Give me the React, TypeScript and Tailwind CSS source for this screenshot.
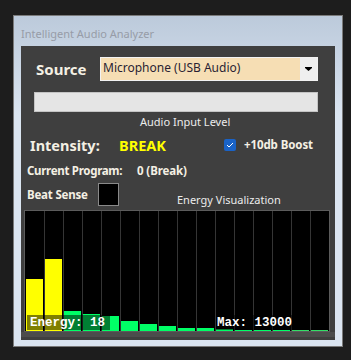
import React from "react";

const bars: { h: number; c: string }[] = [
  { h: 52, c: "#ffff00" },
  { h: 72, c: "#ffff00" },
  { h: 20, c: "#00ff66" },
  { h: 17, c: "#00ff66" },
  { h: 15, c: "#00ff66" },
  { h: 10, c: "#00ff66" },
  { h: 7, c: "#00ff66" },
  { h: 5, c: "#00ff66" },
  { h: 3, c: "#00ff66" },
  { h: 3, c: "#00ff66" },
  { h: 2, c: "#00ff66" },
  { h: 1, c: "#00ff66" },
  { h: 1, c: "#00ff66" },
  { h: 1, c: "#00ff66" },
  { h: 1, c: "#33dd66" },
  { h: 1, c: "#33dd66" },
];

const sans = { fontFamily: '"Noto Sans", "Open Sans", sans-serif' };

export default function App() {
  return (
    <div className="w-[351px] h-[360px] bg-[#1d1d1d] pt-[15px] pl-[13px] overflow-hidden" style={sans}>
      <div className="w-[330px] h-[332px] border border-[#7a7a7a] bg-gradient-to-b from-[#bccadb] to-[#dbe5f1] to-[30%] pl-[7px]">
        <div className="h-[30px] pt-[10px] text-[11px] leading-[16px] text-[#979ca7]">
          Intelligent Audio Analyzer
        </div>
        <div className="w-[314px] h-[294px] bg-[#3f3f3f] flex flex-col">
          {/* Source row */}
          <div className="mt-[11px] h-[24px] flex items-center">
            <div className="ml-[15px] w-[64px] text-[15px] font-bold text-[#f4f0e4] leading-[20px]">Source</div>
            <div className="w-[218px] h-[24px] border border-[#f2f2f2] flex">
              <div className="flex-1 bg-[#f6deb4] pl-[2px] text-[12px] leading-[20px] text-[#2a1f33]">
                Microphone (USB Audio)
              </div>
              <div className="w-[17px] bg-[#efefef] flex items-center justify-center">
                <svg width="7" height="4" viewBox="0 0 7 4">
                  <path d="M0 0H7V1L3.5 4L0 1Z" fill="#000" />
                </svg>
              </div>
            </div>
          </div>
          {/* Level bar */}
          <div className="mt-[11px] ml-[13px] w-[284px] h-[20px] bg-[#e5e5e5] border border-[#c4c4c4]" />
          {/* Audio input level */}
          <div className="h-[20px] flex items-center pl-[119px] text-[11px] text-[#ececec] leading-[14px]">
            Audio Input Level
          </div>
          {/* Intensity row */}
          <div className="h-[26px] flex items-center">
            <div className="ml-[9px] w-[89px] text-[14.5px] font-bold text-[#f4f0e4] leading-[20px]">Intensity:</div>
            <div className="w-[105px] text-[14.5px] font-bold text-[#ffff00] leading-[20px]">BREAK</div>
            <div className="w-[12px] h-[12px] rounded-[2px] bg-[#1a63c7] flex items-center justify-center">
              <svg width="8" height="6" viewBox="0 0 8 6">
                <path d="M1 3L3 5L7 1" stroke="#fff" strokeWidth="1" fill="none" />
              </svg>
            </div>
            <div className="ml-[8px] text-[11.5px] tracking-[-0.1px] font-bold text-[#f4f0e4] leading-[16px]">+10db Boost</div>
          </div>
          {/* Current program */}
          <div className="h-[25px] flex items-center">
            <div className="ml-[6px] w-[110px] text-[11.5px] tracking-[-0.3px] font-bold text-[#f4f0e4] leading-[16px]">Current Program:</div>
            <div className="text-[11.5px] tracking-[-0.1px] font-bold text-[#f4f0e4] leading-[16px]">0 (Break)</div>
          </div>
          {/* Beat sense row */}
          <div className="h-[27px] flex items-start">
            <div className="ml-[6px] mt-[4px] w-[71px] text-[11.5px] tracking-[-0.2px] font-bold text-[#f4f0e4] leading-[16px]">Beat Sense</div>
            <div className="w-[21px] h-[23px] bg-black border border-[#8a8a8a]" />
            <div className="ml-[58px] mt-[10px] text-[11px] text-[#ececec] leading-[14px]">Energy Visualization</div>
          </div>
          {/* Chart */}
          <div className="ml-[3px] w-[306px] border border-[#5c5c5c] bg-black">
            <div className="relative h-[120px] flex">
              {bars.map((b, i) => (
                <div
                  key={i}
                  className={
                    i === 0
                      ? "w-[19px] h-full flex items-end pl-[1px]"
                      : "w-[19px] h-full flex items-end border-l border-[#353535]"
                  }
                >
                  <div className="w-[17px]" style={{ height: b.h, backgroundColor: b.c }} />
                </div>
              ))}
              <div
                className="absolute left-[2px] top-[104px] w-[83px] h-[15px] bg-[rgba(0,0,0,0.5)] pl-[3px] pt-[1px] text-[12.5px] leading-[14px] font-bold text-white whitespace-pre"
                style={{ fontFamily: '"Liberation Mono", monospace' }}
              >
                Energy: 18
              </div>
              <div
                className="absolute left-[191px] top-[104px] w-[77px] h-[15px] bg-[rgba(0,0,0,0.5)] pl-[1px] pt-[1px] text-[12.5px] leading-[14px] font-bold text-white whitespace-pre"
                style={{ fontFamily: '"Liberation Mono", monospace' }}
              >
                Max: 13000
              </div>
            </div>
          </div>
          <div className="h-[5px] bg-[#4c4c4c]" />
        </div>
      </div>
    </div>
  );
}
